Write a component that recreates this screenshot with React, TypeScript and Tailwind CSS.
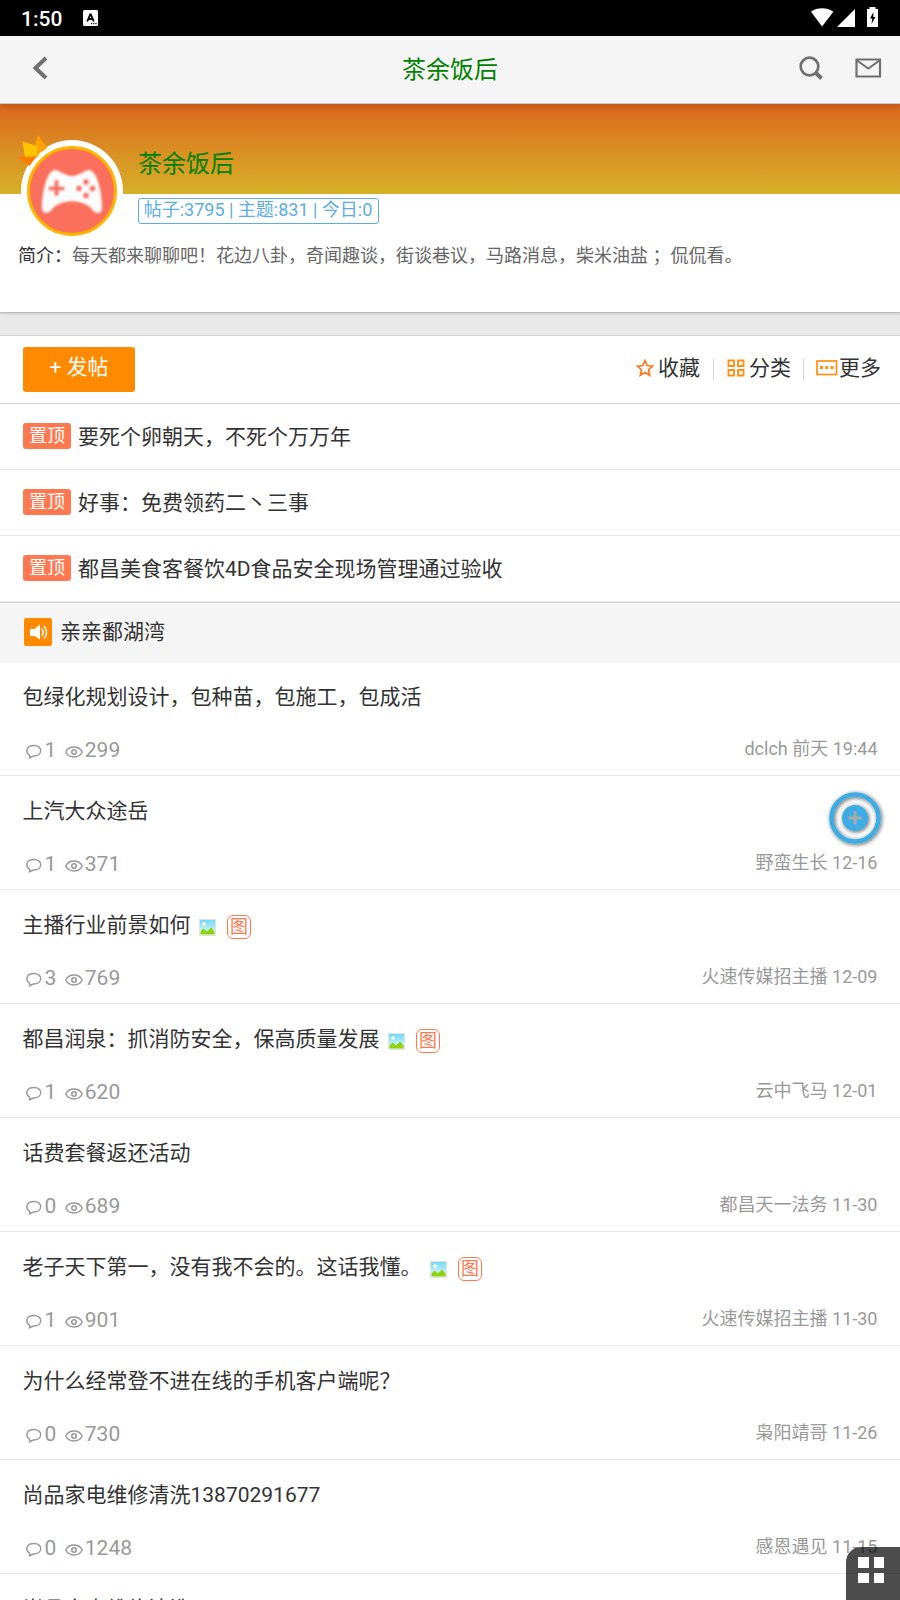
import React from 'react';

interface Post {
  title: string;
  replies: number;
  views: number;
  author: string;
  date: string;
  hasImage?: boolean;
}

const PINNED = [
  '要死个卵朝天，不死个万万年',
  '好事：免费领药二丶三事',
  '都昌美食客餐饮4D食品安全现场管理通过验收',
];

const POSTS: Post[] = [
  { title: '包绿化规划设计，包种苗，包施工，包成活', replies: 1, views: 299, author: 'dclch', date: '前天 19:44' },
  { title: '上汽大众途岳', replies: 1, views: 371, author: '野蛮生长', date: '12-16' },
  { title: '主播行业前景如何', replies: 3, views: 769, author: '火速传媒招主播', date: '12-09', hasImage: true },
  { title: '都昌润泉：抓消防安全，保高质量发展', replies: 1, views: 620, author: '云中飞马', date: '12-01', hasImage: true },
  { title: '话费套餐返还活动', replies: 0, views: 689, author: '都昌天一法务', date: '11-30' },
  { title: '老子天下第一，没有我不会的。这话我懂。', replies: 1, views: 901, author: '火速传媒招主播', date: '11-30', hasImage: true },
  { title: '为什么经常登不进在线的手机客户端呢？', replies: 0, views: 730, author: '枭阳靖哥', date: '11-26' },
  { title: '尚品家电维修清洗13870291677', replies: 0, views: 1248, author: '感恩遇见', date: '11-15' },
];

const StatusBar = () => (
  <div className="h-9 bg-black text-white flex items-center pl-[21px] pr-[21px]">
    <span className="text-[21px] leading-9 pt-px font-medium w-[62px]">1:50</span>
    <svg className="w-[15px] h-4" viewBox="0 0 15 16">
      <rect width="15" height="16" rx="1.5" fill="#fff" />
      <path d="M4.2 11.5 7.2 4.5h.6l3 7M5.4 9h4.2" fill="none" stroke="#000" strokeWidth="1.8" />
      <path d="M8 13.7h1.2m1 0h1.2m1 0h1.2" stroke="#000" strokeWidth="1.2" />
    </svg>
    <svg className="ml-auto w-[69px] h-[22px] shrink-0" viewBox="0 0 69 22">
      <path d="M1 4.8C7.2.2 17 .2 23.3 4.8L12.1 19.5Z" fill="#fff" />
      <path d="M27 20 45 2v18Z" fill="#fff" />
      <path d="M59.5 0h6v2H68v18H57V2h2.5Z" fill="#fff" />
      <path d="M63.5 5 60 11.5h2.3L61.5 17l4-7h-2.3Z" fill="#000" />
    </svg>
  </div>
);

const Header = () => (
  <div className="relative z-10 h-[68px] pb-[3px] bg-[#f5f5f5] border-b border-[#c8c8c8] shadow-[0_2px_6px_rgba(0,0,0,0.15)] flex items-center justify-between pl-8 pr-[18px]">
    <svg className="w-[16px] h-[24px]" viewBox="0 0 16 24">
      <path d="M14 2 3.5 12 14 22" fill="none" stroke="#707070" strokeWidth="4" />
    </svg>
    <h1 className="absolute left-0 top-px w-full text-center text-2xl leading-[67px] text-[#008000]">茶余饭后</h1>
    <div className="flex items-center gap-8">
      <svg className="w-6 h-6" viewBox="0 0 24 24">
        <circle cx="10.5" cy="10.5" r="8.8" fill="none" stroke="#707070" strokeWidth="2.7" />
        <path d="m16 16 6.5 6.5" stroke="#707070" strokeWidth="4" />
      </svg>
      <svg className="w-[27px] h-5" viewBox="0 0 27 20">
        <path d="M1.5 1.5h23.5v17H1.5Z" fill="none" stroke="#707070" strokeWidth="2.2" />
        <path d="m2 2.5 11.3 8L24.5 2.5" fill="none" stroke="#707070" strokeWidth="2" />
      </svg>
    </div>
  </div>
);

const Avatar = () => (
  <svg className="absolute left-4 top-[30px] w-[108px] h-[104px]" viewBox="0 0 108 104">
    <defs>
      <filter id="soft" x="-10%" y="-10%" width="120%" height="120%">
        <feGaussianBlur stdDeviation="0.8" />
      </filter>
    </defs>
    <path d="M5 60V57a51 51 0 0 1 102 0V60Z" fill="#fff" />
    <circle cx="56" cy="57" r="43.5" fill="#fa705c" stroke="#ffb400" strokeWidth="3" />
    <g filter="url(#soft)">
      <path d="M39 36C44 36 48 42 56 42S68 36 73 36C80 36 86 55 86 74C86 81 78 80 75 74C66 65 46 65 37 74C34 80 26 81 26 74C26 55 32 36 39 36Z" fill="#fcfcfc" />
      <path d="M40.5 46v16M32.5 54.5h16" stroke="#f76f60" strokeWidth="4.2" />
      <circle cx="70" cy="48" r="3" fill="#f76f60" />
      <circle cx="70" cy="61.5" r="3" fill="#f76f60" />
      <circle cx="63" cy="54.5" r="3" fill="#f76f60" />
      <circle cx="76.5" cy="54.5" r="3" fill="#f76f60" />
    </g>
    <path d="M1 23 21 21.5 24 20Q18 25 13.5 32Z" fill="#ff7e00" />
    <path d="m22 1 9.5 13Q24 18 19 24l.5-15Z" fill="#ffa200" />
    <path d="m6.5 7.500 15 4.5-.5 10-12 1Z" fill="#ffc400" />
  </svg>
);

const ForumInfo = () => (
  <div className="relative h-[209px] border-b border-[#bdbdbd] shadow-[0_1px_2px_rgba(0,0,0,0.15)] bg-white">
    <div className="h-[90px] bg-linear-to-b from-[#da661e] to-[#d5b027] pl-[138px] pt-[42px]">
      <h2 className="text-2xl leading-9 text-[#008000]">茶余饭后</h2>
    </div>
    <Avatar />
    <div className="ml-[138px] mt-1 w-[241px] h-[26px] border border-[#5dade2] rounded-[3px] pr-px text-center text-lg leading-[22px] text-[#5dade2] whitespace-nowrap">
      帖子:3795 | 主题:831 | 今日:0
    </div>
    <p className="ml-[18px] mt-[18px] text-lg leading-7 text-[#666] whitespace-nowrap">
      <span className="text-[#333]">简介：</span>每天都来聊聊吧！花边八卦，奇闻趣谈，街谈巷议，马路消息，柴米油盐 ；侃侃看。
    </p>
  </div>
);

const Toolbar = () => (
  <div className="h-[69px] mt-[22px] border-y border-[#d3d3d3] bg-white flex items-center justify-between pl-[23px] pr-[19px] text-[21px] text-[#333]">
    <button className="w-28 h-[45px] pb-[3px] bg-[#ff8a00] rounded-[3px] text-white">+ 发帖</button>
    <div className="flex items-center pb-1">
      <svg className="w-[18px] h-[18px] mr-1" viewBox="0 0 18 18">
        <path d="m9 1.500 2.200 5 5.300.6-4 3.600 1.200 5.500L9 13.400l-4.700 2.800 1.200-5.500-4-3.600 5.300-.6Z" fill="none" stroke="#ff751a" strokeWidth="1.7" />
      </svg>
      <span className="leading-8 pt-px">收藏</span>
      <i className="w-px h-[21px] mt-1 mx-[13px] bg-[#d3d3d3]" />
      <svg className="w-[18px] h-[18px] mr-1" viewBox="0 0 18 18">
        <path d="M1.500 1.500h5.500V7H1.500ZM11 1.500h5.500V7H11ZM1.500 11h5.500v5.500H1.500ZM11 11h5.500v5.500H11Z" fill="none" stroke="#ff9014" strokeWidth="1.9" />
      </svg>
      <span className="leading-8 pt-px">分类</span>
      <i className="w-px h-[21px] mt-1 mx-[12px] bg-[#d3d3d3]" />
      <svg className="w-[22px] h-4 mr-px" viewBox="0 0 22 16">
        <rect x="1" y="1" width="19.5" height="13.5" fill="none" stroke="#ff9014" strokeWidth="1.7" />
        <path d="M4 7.500h3M9.300 7.500h3M14.500 7.500h3" stroke="#ff9014" strokeWidth="3" />
      </svg>
      <span className="leading-8 pt-px">更多</span>
    </div>
  </div>
);

const ImageIcon = () => (
  <svg className="w-[17px] h-[17px] shrink-0" viewBox="0 0 17 17">
    <defs>
      <linearGradient id="sky" x1="0" y1="0" x2="0" y2="1">
        <stop offset="0" stopColor="#72d9f5" />
        <stop offset="1" stopColor="#e8fbff" />
      </linearGradient>
    </defs>
    <rect width="17" height="17" fill="#e2e2e2" />
    <rect x="1" y="1" width="15" height="15" fill="url(#sky)" />
    <circle cx="5" cy="5" r="1.8" fill="#fffbd0" />
    <path d="M1.500 15.500v-3l3-3 3.500 3L12 8.500l3.500 4v3Z" fill="#8fd40a" />
  </svg>
);

const PostRow = ({ post }: { post: Post }) => (
  <li className="h-[114px] border-b border-[#e8e8e8] pl-[22.5px] pr-[22.5px]">
    <div className="h-[70px] flex items-center">
      <span className="text-[21px] leading-8 text-[#333]">{post.title}</span>
      {post.hasImage && (
        <span className="flex items-center gap-[11px] ml-[8.5px] mt-[4px]">
          <ImageIcon />
          <span className="w-6 h-6 border border-[#ff7850] rounded-[6px] text-lg leading-[21px] text-center text-[#ff7850]">图</span>
        </span>
      )}
    </div>
    <div className="flex justify-between mt-[4px] text-[#999]">
      <div className="flex items-center text-[21px] leading-[28px] h-[28px]">
        <svg className="w-4 h-[15px] ml-[3.5px] mr-[2.5px] mt-[3px]" viewBox="0 0 16 15">
          <path d="M4 11.500C-1.500 8 .5 1.500 8 1.500c9 0 9 10.500-.5 10.500L3.500 13.700 4 11.500" fill="none" stroke="#999" strokeWidth="1.4" />
        </svg>
        <span>{post.replies}</span>
        <svg className="w-[18px] h-3 ml-[9px] mr-[1.5px] mt-[4px]" viewBox="0 0 18 12">
          <path d="M.8 6C4-.6 14-.6 17.200 6 14 12.600 4 12.600.8 6Z" fill="none" stroke="#999" strokeWidth="1.5" />
          <circle cx="9" cy="6" r="2.2" fill="none" stroke="#999" strokeWidth="1.6" />
        </svg>
        <span>{post.views}</span>
      </div>
      <span className="text-lg leading-[26px]">{post.author} {post.date}</span>
    </div>
  </li>
);

const App: React.FC = () => {
  return (
    <div className="relative w-[900px] h-[1600px] overflow-hidden bg-[#e8e8e8] font-['Roboto','Noto_Sans_CJK_SC',sans-serif]">
      <StatusBar />
      <Header />
      <ForumInfo />
      <Toolbar />
      <ul className="bg-white">
        {PINNED.map((title) => (
          <li key={title} className="h-[66px] border-b border-[#e8e8e8] flex items-center pl-[23px]">
            <span className="w-12 h-[26px] mb-[2px] mr-[7px] rounded-[3px] bg-[#ff7850] text-white text-lg leading-[25px] text-center">置顶</span>
            <span className="text-[21px] leading-8 text-[#333]">{title}</span>
          </li>
        ))}
      </ul>
      <div className="relative h-[61px] pb-[3px] border-t border-[#d3d3d3] bg-[#f5f5f5] flex items-center pl-6 text-[21px] text-[#333]">
        <svg className="w-[28px] h-[28px] mr-2" viewBox="0 0 28 28">
          <rect width="28" height="28" rx="2" fill="#ff8a00" />
          <path d="M6 11h4.500L16 6.500v15L10.500 18H6Z" fill="#fff" />
          <path d="M18 10.500c1.500 2 1.500 5.500 0 7.500M20 8c3.300 3 3.300 9.500 0 12.500" fill="none" stroke="#fff" strokeWidth="1.5" />
        </svg>
        <span className="leading-8">亲亲鄱湖湾</span>
      </div>
      <ul className="bg-white -mt-px">
        {POSTS.map((post) => (
          <PostRow key={post.title} post={post} />
        ))}
        <PostRow post={{ title: '尚品家电维修清洗', replies: 0, views: 1106, author: '感恩遇见', date: '11-15' }} />
      </ul>

      {/* floating assistive button */}
      <svg className="absolute left-[825px] top-[788px] w-[62px] h-[62px]" viewBox="0 0 62 62">
        <defs>
          <filter id="glow" x="-20%" y="-20%" width="140%" height="140%">
            <feDropShadow dx="1" dy="1" stdDeviation="2.2" floodColor="#000" floodOpacity="0.65" />
          </filter>
        </defs>
        <g filter="url(#glow)">
          <circle cx="30" cy="30" r="23.5" fill="none" stroke="#3dabe4" strokeWidth="4.5" />
          <circle cx="30" cy="30" r="13" fill="#3dabe4" />
        </g>
        <path d="M30 23.500v13M23.500 30h13" stroke="#aaa" strokeWidth="3" />
      </svg>

      <div className="absolute right-0 bottom-0 w-[54px] h-[53px] rounded-tl-[15px] bg-black/70 pl-3 pt-[10px]">
        <div className="grid grid-cols-2 gap-[5px] w-[26px]">
          <i className="h-[10.5px] bg-white" />
          <i className="h-[10.5px] bg-white" />
          <i className="h-[10.5px] bg-white" />
          <i className="h-[10.5px] bg-white" />
        </div>
      </div>
    </div>
  );
};

export default App;
